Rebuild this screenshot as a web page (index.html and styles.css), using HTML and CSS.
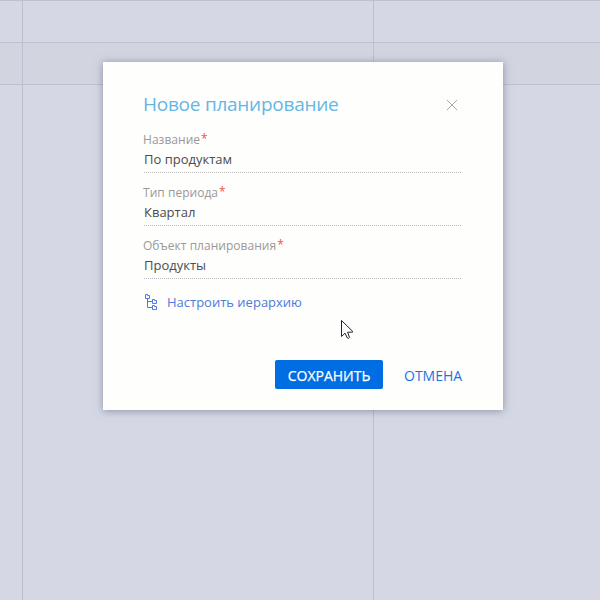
FILE: index.html
```html
<!DOCTYPE html>
<html lang="ru">
<head>
<meta charset="utf-8">
<title>Новое планирование</title>
<link rel="stylesheet" href="styles.css">
</head>
<body>
<main class="backdrop">
  <div class="grid-lines"><i class="row"></i><i class="row row-shaded"></i><i class="row row-last"></i></div>
  <div class="columns"><i class="col-first"></i><i class="col-main"></i><i class="col-rest"></i></div>
  <section class="dialog">
    <header class="dialog-header">
      <h1>Новое планирование</h1>
      <button class="close" aria-label="Закрыть"><svg width="12" height="12" viewBox="0 0 12 12"><path d="M.8.8l10.4 10.4M11.2.8L.8 11.2"/></svg></button>
    </header>
    <div class="field"><label>Название<span class="req">*</span></label><div class="value">По продуктам</div></div>
    <div class="field"><label>Тип периода<span class="req">*</span></label><div class="value">Квартал</div></div>
    <div class="field"><label>Объект планирования<span class="req">*</span></label><div class="value">Продукты</div></div>
    <a class="hierarchy">
      <svg width="13" height="17" viewBox="0 0 13 17"><path d="M.5.5h2v1h2v3h-4zM2.5 4.5v9h5M2.5 7.5h5M7.5 5.5h2v1h2v3h-4zM7.5 11.5h2v1h2v3h-4z"/></svg>
      <span>Настроить иерархию</span>
    </a>
    <footer class="actions">
      <button class="save"><span>СОХРАНИТЬ</span></button>
      <button class="cancel"><span>ОТМЕНА</span></button>
    </footer>
  </section>
  <svg class="cursor" width="13" height="21" viewBox="0 0 13 21"><path d="M.5.5v16l3.5-3.3 2.4 4.8q1 1.2 2.1-.6L6.6 12.2h4.9v-1z"/></svg>
</main>
</body>
</html>
```
FILE: styles.css
```css
* { box-sizing: border-box; }
body { margin: 0; font-family: "Open Sans", sans-serif; }
h1 { margin: 0; }
button { margin: 0; padding: 0; border: 0; background: none; font-family: inherit; }
svg { display: block; }

.backdrop {
  position: relative;
  width: 600px;
  height: 600px;
  padding: 62px 97px 0 103px;
  overflow: hidden;
  background: #d5d8e4;
}
.grid-lines { position: absolute; inset: 0; }
.row { display: block; height: 42px; border-top: 1px solid #bcc0cf; }
.row-shaded { background: #d2d4df; }
.columns { position: absolute; inset: 0; display: flex; }
.col-first { width: 23px; border-right: 1px solid #bcc0cf; }
.col-main { width: 351px; border-right: 1px solid #bcc0cf; }
.col-rest { flex: 1; }

.dialog {
  position: relative;
  display: flex;
  flex-direction: column;
  width: 400px;
  height: 348px;
  padding: 30px 41px 21px 40px;
  background: #fefefd;
  box-shadow: 0 1px 8px rgba(70, 75, 110, .5);
}
.dialog-header {
  display: flex;
  justify-content: space-between;
  height: 26px;
  padding-right: 4px;
}
.dialog-header h1 { height: 24px; font-size: 19px; line-height: 24px; font-weight: 400; letter-spacing: -.25px; color: #65b7e2; }
.close { height: 26px; }
.close path { fill: none; stroke: #a8a8a8; stroke-width: 1; }

.field { height: 53px; padding-top: 12px; }
.field:first-of-type { height: 55px; padding-top: 14px; }
label { display: block; height: 18px; font-size: 12px; line-height: 16px; letter-spacing: .03px; color: #999; white-space: nowrap; }
.req { display: inline-block; height: 16px; margin: -1px 0 0 1px; vertical-align: top; color: #f0564b; }
.value {
  height: 23px;
  margin-left: 1px;
  font-size: 13px;
  line-height: 18px;
  color: #4b4b50;
  background: repeating-linear-gradient(90deg, #bbb 0 1px, transparent 1px 2px) bottom / 100% 1px no-repeat;
}
.hierarchy { display: flex; height: 20px; margin: 13px 0 0 2px; color: #4c7bdb; font-size: 13px; line-height: 20px; }
.hierarchy svg { margin-top: 2px; }
.hierarchy path { fill: none; stroke: #4c7bdb; }
.hierarchy span { margin-left: 9px; }

.actions { display: flex; justify-content: flex-end; margin-top: auto; gap: 21px; }
.actions button { height: 29px; font-size: 14px; line-height: 31px; }
.save { width: 108px; border-radius: 2px; background: #006de2; color: #fff; -webkit-text-stroke: .25px #fff; }
.cancel { width: 58px; color: #1875e0; text-align: left; }
.cursor { position: absolute; left: 341px; top: 320px; }
.cursor path { fill: #fff; stroke: #20202a; stroke-width: 1; }
```
